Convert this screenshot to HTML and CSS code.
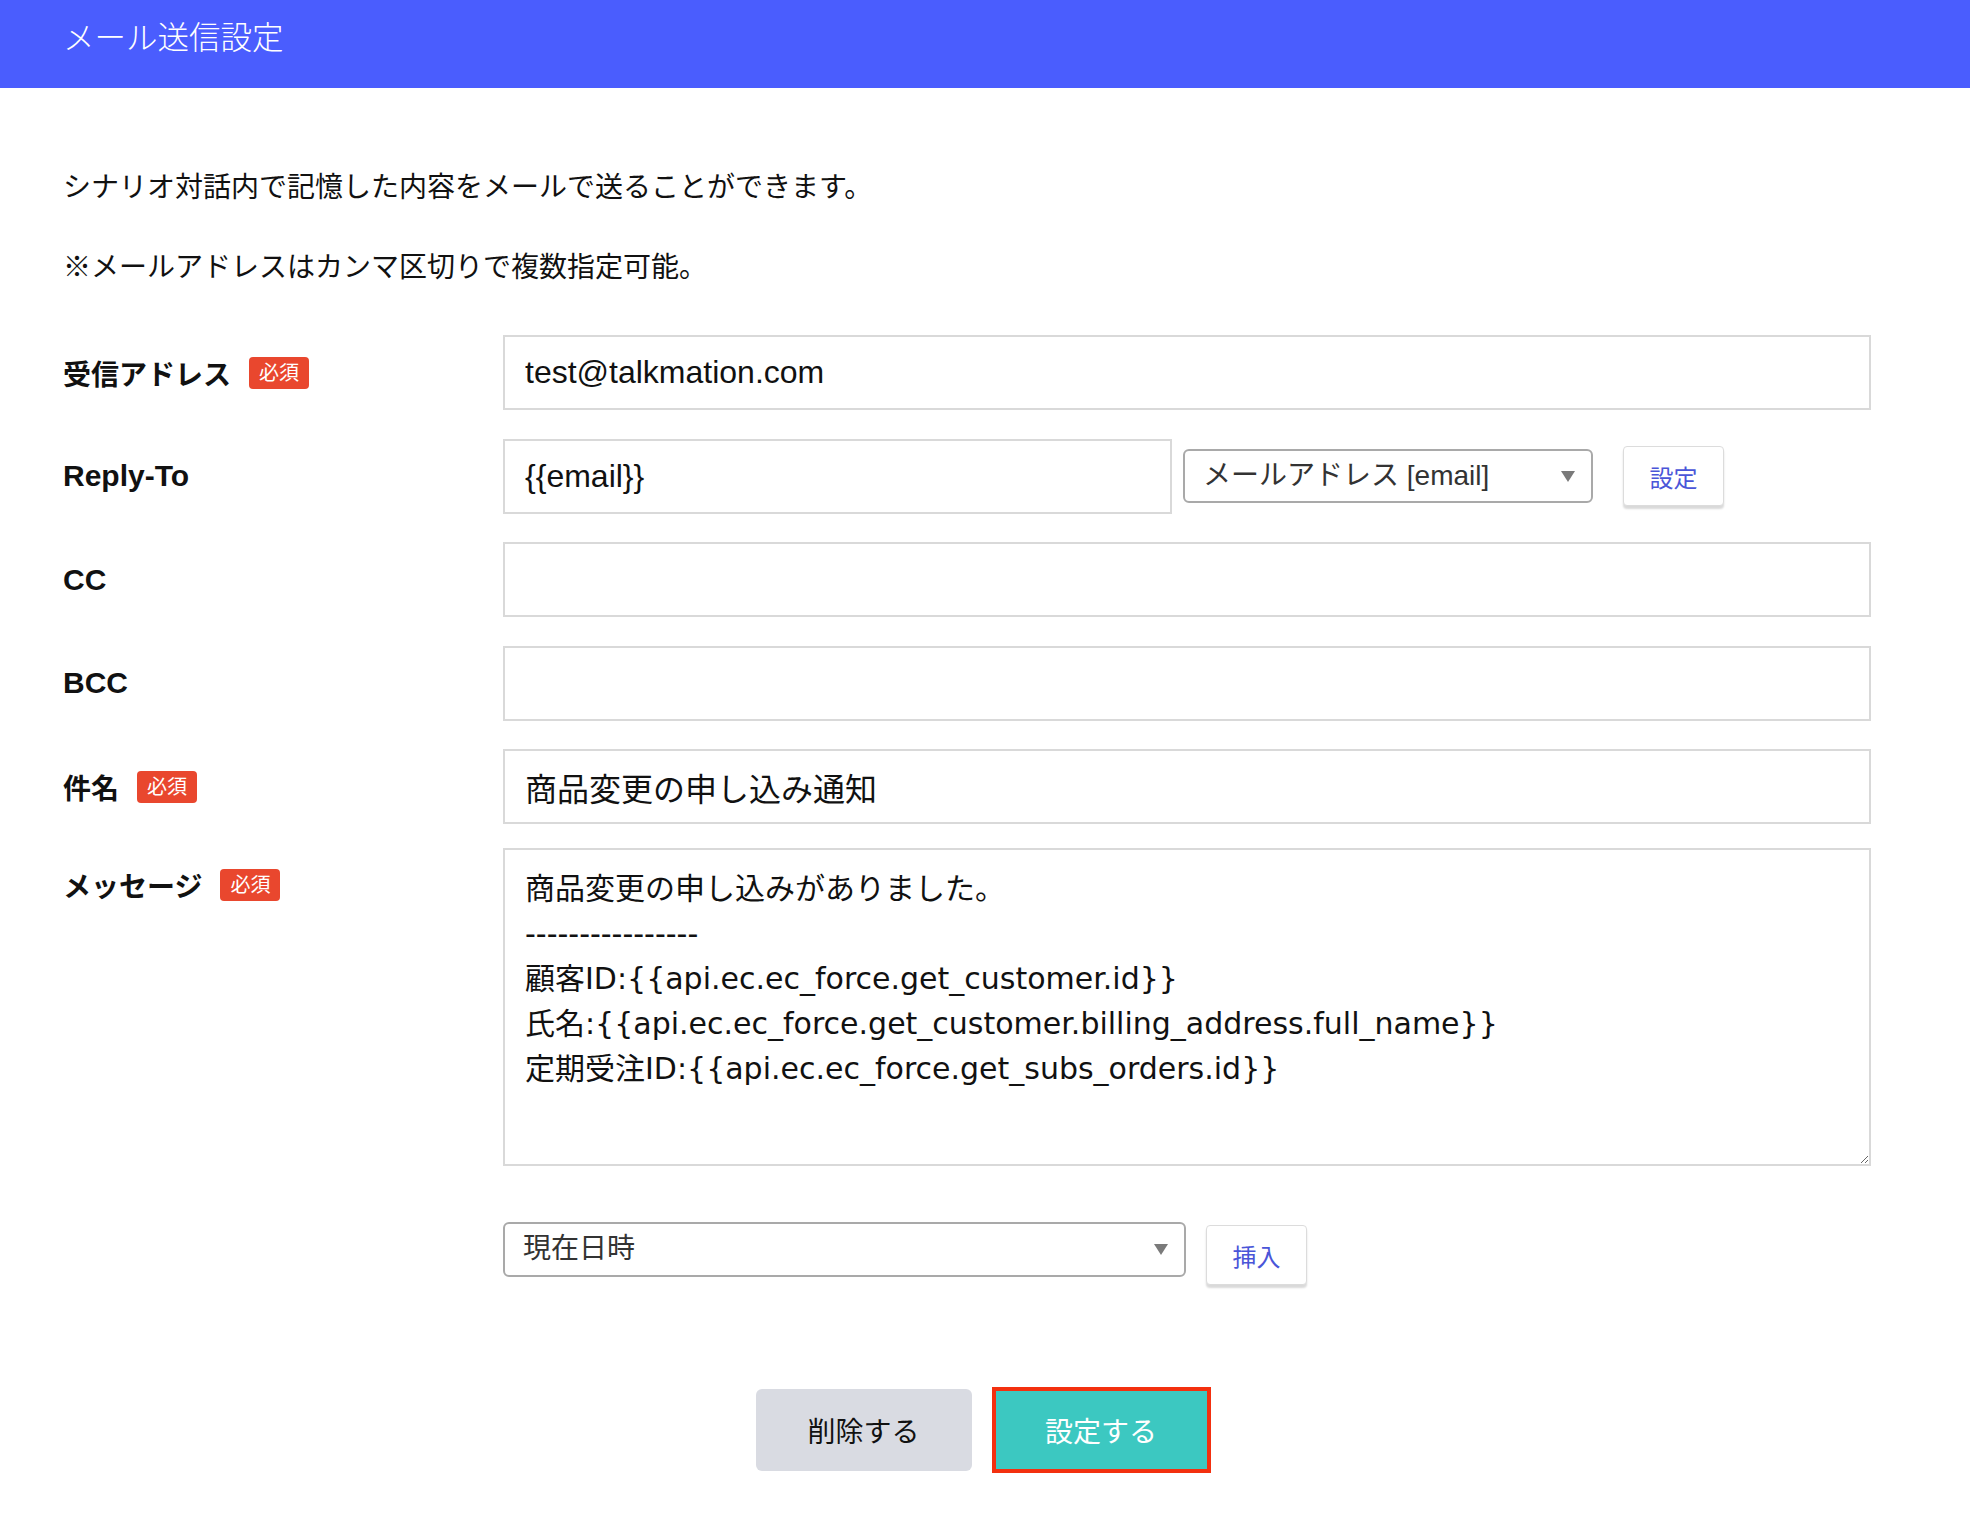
FILE: index.html
```html
<!DOCTYPE html>
<html lang="ja">
<head>
    <meta charset="UTF-8">
    <meta name="viewport" content="width=device-width, initial-scale=1.0">
    <title>メール送信設定</title>
    <link rel="stylesheet" href="styles.css">
</head>
<body>
    <header class="page-header">
        <h1>メール送信設定</h1>
    </header>

    <main class="content">
        <p class="note">シナリオ対話内で記憶した内容をメールで送ることができます。</p>
        <p class="note">※メールアドレスはカンマ区切りで複数指定可能。</p>

        <form class="mail-form">
            <div class="form-row">
                <label class="field-label" for="to">受信アドレス <span class="badge">必須</span></label>
                <div class="field">
                    <input class="text-input" id="to" type="text" value="test@talkmation.com">
                </div>
            </div>

            <div class="form-row">
                <label class="field-label latin" for="reply-to">Reply-To</label>
                <div class="field inline-field">
                    <input class="text-input reply-input" id="reply-to" type="text" value="{{email}}">
                    <div class="select-box reply-select">メールアドレス [email]</div>
                    <button type="button" class="small-button">設定</button>
                </div>
            </div>

            <div class="form-row">
                <label class="field-label latin" for="cc">CC</label>
                <div class="field">
                    <input class="text-input" id="cc" type="text">
                </div>
            </div>

            <div class="form-row">
                <label class="field-label latin" for="bcc">BCC</label>
                <div class="field">
                    <input class="text-input" id="bcc" type="text">
                </div>
            </div>

            <div class="form-row subject-row">
                <label class="field-label" for="subject">件名 <span class="badge">必須</span></label>
                <div class="field">
                    <input class="text-input" id="subject" type="text" value="商品変更の申し込み通知">
                </div>
            </div>

            <div class="form-row">
                <label class="field-label" for="message">メッセージ <span class="badge">必須</span></label>
                <div class="field">
                    <textarea class="message-input" id="message">商品変更の申し込みがありました。
----------------
顧客ID:{{api.ec.ec_force.get_customer.id}}
氏名:{{api.ec.ec_force.get_customer.billing_address.full_name}}
定期受注ID:{{api.ec.ec_force.get_subs_orders.id}}</textarea>
                    <div class="insert-row">
                        <div class="select-box insert-select">現在日時</div>
                        <button type="button" class="small-button">挿入</button>
                    </div>
                </div>
            </div>
        </form>

        <div class="actions">
            <button type="button" class="delete-button">削除する</button>
            <button type="button" class="submit-button">設定する</button>
        </div>
    </main>
</body>
</html>
```

FILE: styles.css
```css
body {
    margin: 0;
    font-family: "Liberation Sans", "Noto Sans CJK JP", sans-serif;
    color: #111;
    background: #fff;
}
.page-header {
    height: 88px;
    background-color: #4a5dfe;
    padding: 0 63px;
    box-sizing: border-box;
}
.page-header h1 {
    margin: 0;
    font-size: 31.5px;
    font-weight: 300;
    line-height: 76px;
    color: #fff;
}
.content {
    padding: 79px 99px 60px 63px;
}
.note {
    margin: 0 0 38px;
    font-size: 28px;
    line-height: 42px;
}
.mail-form {
    margin-top: 46px;
}
.form-row {
    display: flex;
    align-items: flex-start;
    margin-bottom: 28.5px;
}
.subject-row {
    margin-bottom: 23.5px;
}
.field-label {
    flex: none;
    width: 440px;
    height: 75px;
    display: flex;
    align-items: center;
    font-size: 28px;
    font-weight: bold;
}
.field-label.latin {
    font-size: 30px;
}
.badge {
    display: inline-block;
    margin-left: 18px;
    padding: 0 10px;
    height: 32px;
    line-height: 32px;
    font-size: 20px;
    font-weight: normal;
    color: #fff;
    background-color: #e9472e;
    border-radius: 4px;
}
.field {
    flex: 1;
}
.inline-field {
    display: flex;
    align-items: center;
}
.text-input {
    width: 100%;
    height: 75px;
    box-sizing: border-box;
    border: 2px solid #d9d9d9;
    padding: 0 20px;
    font-family: inherit;
    font-size: 32px;
    color: #111;
    outline: none;
}
.reply-input {
    flex: none;
    width: 669px;
}
.select-box {
    position: relative;
    box-sizing: border-box;
    height: 54px;
    line-height: 50px;
    border: 2px solid #a9a9a9;
    border-radius: 6px;
    padding: 0 18px;
    font-size: 28px;
    color: #333;
}
.select-box::after {
    content: "";
    position: absolute;
    right: 16px;
    top: 20px;
    border-left: 7px solid transparent;
    border-right: 7px solid transparent;
    border-top: 11px solid #7a7a7a;
}
.reply-select {
    flex: none;
    width: 410px;
    margin-left: 11px;
}
.small-button {
    width: 101px;
    height: 60px;
    margin-left: 30px;
    background: #fff;
    border: 1px solid #dcdcdc;
    border-radius: 4px;
    box-shadow: 0 3px 2px rgba(0, 0, 0, 0.15);
    font-family: inherit;
    font-size: 24px;
    color: #4a55d8;
    cursor: pointer;
}
.message-input {
    display: block;
    width: 100%;
    height: 318px;
    box-sizing: border-box;
    border: 2px solid #d9d9d9;
    padding: 16px 20px;
    font-family: "DejaVu Sans", "Noto Sans CJK JP", sans-serif;
    font-size: 30px;
    line-height: 45px;
    color: #111;
    resize: vertical;
    outline: none;
}
.insert-row {
    display: flex;
    align-items: flex-start;
    margin-top: 56.5px;
}
.insert-select {
    width: 683px;
    height: 55px;
}
.insert-row .small-button {
    margin-left: 20px;
    margin-top: 3px;
}
.actions {
    display: flex;
    justify-content: center;
    align-items: center;
    gap: 20px;
    margin-top: 102px;
    padding-left: 32px;
}
.delete-button {
    width: 216px;
    height: 82px;
    background-color: #d9dbe2;
    border: none;
    border-radius: 6px;
    font-family: inherit;
    font-size: 28px;
    color: #111;
    cursor: pointer;
}
.submit-button {
    width: 219px;
    height: 86px;
    background-color: #3cc8c1;
    border: 4px solid #f3300f;
    font-family: inherit;
    font-size: 28px;
    color: #fff;
    cursor: pointer;
}
```
